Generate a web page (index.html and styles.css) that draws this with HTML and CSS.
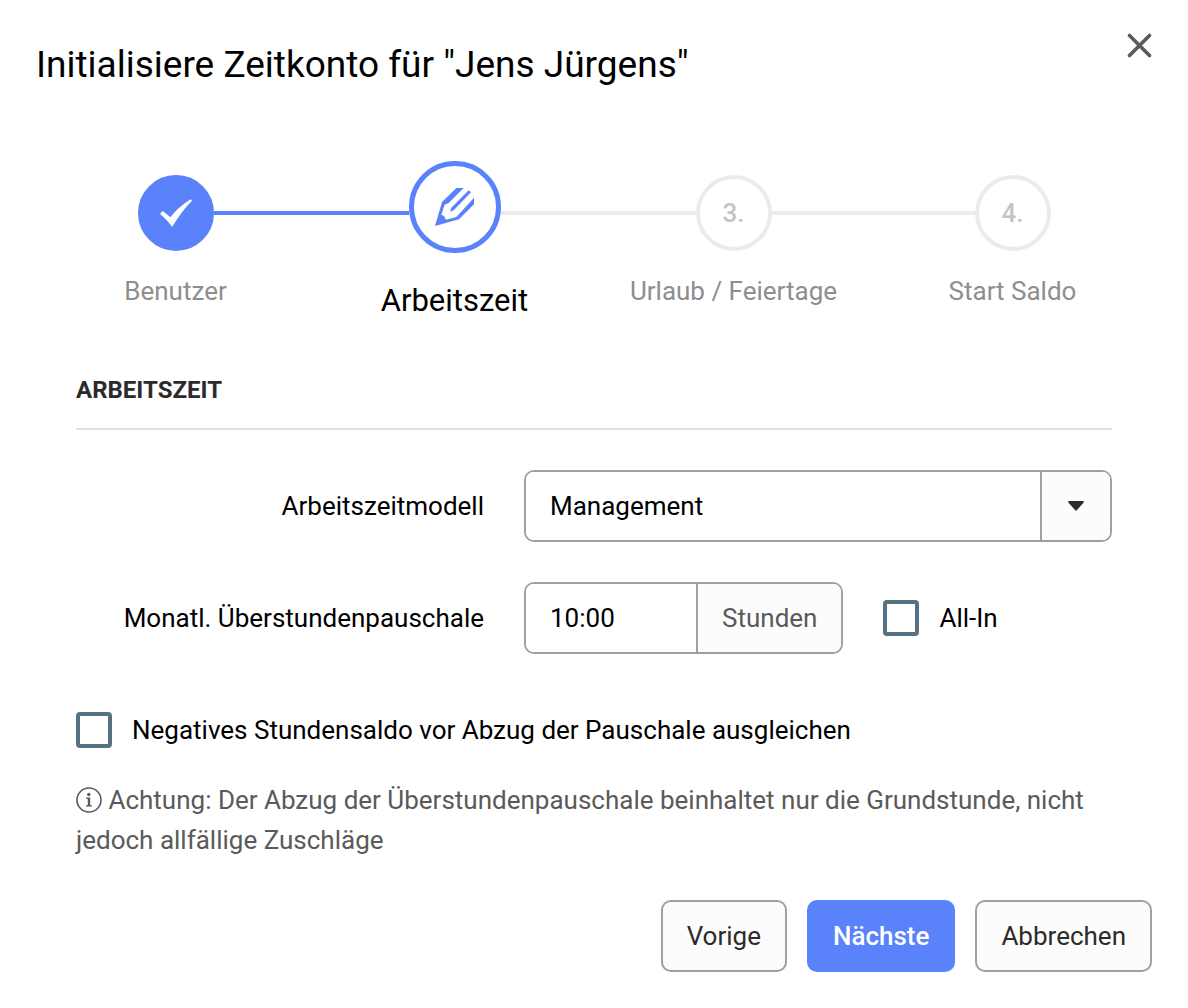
FILE: index.html
```html
<!DOCTYPE html>
<html lang="de">
<head>
<meta charset="utf-8">
<meta name="viewport" content="width=device-width, initial-scale=1">
<title>Initialisiere Zeitkonto</title>
<link rel="stylesheet" href="styles.css">
</head>
<body>
<main class="dialog">
  <header class="dialog-header">
    <h1 class="dialog-title">Initialisiere Zeitkonto für "Jens Jürgens"</h1>
    <button class="close" type="button" aria-label="Schließen">
      <svg width="26" height="26" viewBox="0 0 26 26" fill="none" stroke="#5a5a5a" stroke-width="3.6" stroke-linecap="round"><path d="M3.500 3.500L23.500 23.500M23.500 3.500L3.500 23.500"/></svg>
    </button>
  </header>

  <ol class="steps">
    <li class="step done">
      <div class="track">
        <span class="line hidden"></span>
        <span class="marker"><svg width="32" height="28" viewBox="0 0 96 84" fill="#fff"><path d="M0 45L8 36Q12 38 31 55Q55 24 92 1L96 5Q68 32 36 84Q24 65 0 45Z"/></svg></span>
        <span class="line"></span>
      </div>
      <span class="label">Benutzer</span>
    </li>
    <li class="step active" aria-current="step">
      <div class="track">
        <span class="line reached"></span>
        <span class="marker"><svg width="39" height="38" viewBox="108 111 117 114" fill="#5a82fa"><path d="M172 111H194L149 156L137 161L127 191L135 195L141 206L172 198L225 140V160L180 205L108 225L129 153ZM209 118L216 124L164 178L153 182L157 170Z"/></svg></span>
        <span class="line"></span>
      </div>
      <span class="label">Arbeitszeit</span>
    </li>
    <li class="step">
      <div class="track">
        <span class="line"></span>
        <span class="marker">3.</span>
        <span class="line"></span>
      </div>
      <span class="label">Urlaub / Feiertage</span>
    </li>
    <li class="step">
      <div class="track">
        <span class="line"></span>
        <span class="marker">4.</span>
        <span class="line hidden"></span>
      </div>
      <span class="label">Start Saldo</span>
    </li>
  </ol>

  <form class="form">
    <h2 class="section-title">Arbeitszeit</h2>

    <div class="row">
      <label class="row-label" for="model">Arbeitszeitmodell</label>
      <div class="select-box">
        <select id="model" class="select"><option>Management</option></select>
        <span class="arrow" aria-hidden="true"><svg width="16" height="10" viewBox="0 0 16 10" fill="#2b2b2b"><path d="M1 0H15Q16.500 .5 15.500 1.800L9 9Q8 10 7 9L.5 1.800Q-.5 .5 1 0Z"/></svg></span>
      </div>
    </div>

    <div class="row">
      <label class="row-label" for="hours">Monatl. Überstundenpauschale</label>
      <div class="row-fields">
        <div class="input-group">
          <input id="hours" class="input" type="text" value="10:00">
          <span class="unit">Stunden</span>
        </div>
        <label class="check"><input class="checkbox" type="checkbox">All-In</label>
      </div>
    </div>

    <label class="check check-wide"><input class="checkbox" type="checkbox">Negatives Stundensaldo vor Abzug der Pauschale ausgleichen</label>

    <p class="hint"><svg class="info" width="26" height="26" viewBox="0 0 26 26"><circle cx="13" cy="13" r="12" fill="none" stroke="#5a5a5a" stroke-width="1.600"/><circle cx="12.800" cy="7.500" r="1.700" fill="#5a5a5a"/><path d="M10 10.500H14.200V18L16 18.500V19.500H10V18.500L11.800 18V12L10 11.500Z" fill="#5a5a5a"/></svg> Achtung: Der Abzug der Überstundenpauschale beinhaltet nur die Grundstunde, nicht jedoch allfällige Zuschläge</p>
  </form>

  <footer class="actions">
    <button class="button" type="button">Vorige</button>
    <button class="button primary" type="button">Nächste</button>
    <button class="button" type="button">Abbrechen</button>
  </footer>
</main>
</body>
</html>
```

FILE: styles.css
```css
* { box-sizing: border-box; }

body {
  margin: 0;
  background: #fff;
  color: #000;
  font-family: Roboto, "Liberation Sans", sans-serif;
  font-size: 26px;
  line-height: 40px;
}

.dialog { padding: 32px 36px 36px; }

.dialog-header {
  display: flex;
  justify-content: space-between;
  align-items: flex-start;
}

.dialog-title {
  margin: 8px 0 0;
  font-size: 37px;
  font-weight: 400;
  line-height: 49px;
}

.close {
  display: flex;
  padding: 0;
  border: 0;
  background: none;
}

/* Stepper */
.steps {
  display: grid;
  grid-template-columns: repeat(4, 1fr);
  margin: 72px 0 0;
  padding: 0;
  list-style: none;
}

.step { text-align: center; }

.track {
  display: flex;
  align-items: flex-start;
  height: 92px;
}

.line {
  flex: 1;
  height: 4px;
  margin-top: 50px;
  background: #ebebeb;
}

.done .line,
.line.reached { background: #5a82fa; }

.line.hidden { visibility: hidden; }

.marker {
  display: flex;
  flex: none;
  align-items: center;
  justify-content: center;
  width: 76px;
  height: 76px;
  margin-top: 14px;
  border: 4px solid #ebebeb;
  border-radius: 50%;
  color: #c4c4c4;
  font-weight: 500;
}

.done .marker {
  border-color: #5a82fa;
  background: #5a82fa;
}

.active .marker {
  width: 92px;
  height: 92px;
  margin-top: 0;
  border: 5px solid #5a82fa;
}

.label {
  display: block;
  margin-top: 18px;
  color: #8e8e8e;
}

.active .label {
  margin-top: 28px;
  color: #000;
  font-size: 31px;
}

/* Form */
.form { padding: 49px 40px 0; }

.section-title {
  margin: 0 0 40px;
  padding-bottom: 18px;
  border-bottom: 2px solid #e2e2e2;
  color: #2b2b2b;
  font-size: 24px;
  font-weight: 700;
  text-transform: uppercase;
}

.row {
  display: grid;
  grid-template-columns: 408fr 588fr;
  column-gap: 40px;
  align-items: center;
  margin-bottom: 40px;
}

.row-label { text-align: right; }

.row-fields {
  display: flex;
  align-items: center;
  gap: 40px;
}

.select-box,
.input-group {
  display: flex;
  height: 72px;
  overflow: hidden;
  border: 2px solid #a0a0a0;
  border-radius: 10px;
}

.select-box { display: grid; grid-template-columns: 1fr 70px; }

.select {
  grid-area: 1 / 1 / 2 / 3;
  appearance: none;
  padding: 0 24px;
  border: 0;
  background: #fff;
  color: #000;
  font: inherit;
}

.arrow {
  grid-area: 1 / 2;
  display: flex;
  align-items: center;
  justify-content: center;
  border-left: 2px solid #a0a0a0;
  background: #fcfcfc;
  pointer-events: none;
}

.input {
  width: 170px;
  padding: 0 24px;
  border: 0;
  color: #000;
  font: inherit;
}

.unit {
  padding: 14px 24px;
  border-left: 2px solid #a0a0a0;
  background: #fcfcfc;
  color: #5a5a5a;
}

.check {
  display: flex;
  align-items: center;
  gap: 20px;
}

.check-wide { margin-top: 56px; }

.checkbox {
  appearance: none;
  flex: none;
  width: 36px;
  height: 36px;
  margin: 0;
  border: 4px solid #567282;
  border-radius: 4px;
  background: #fff;
}

.hint {
  margin: 30px 0 0;
  color: #5a5a5a;
}

.info { vertical-align: -4px; }

/* Footer */
.actions {
  display: flex;
  justify-content: flex-end;
  gap: 20px;
  margin-top: 40px;
}

.button {
  height: 72px;
  padding: 0 24px;
  border: 2px solid #a0a0a0;
  border-radius: 10px;
  background: #fcfcfc;
  color: #2b2b2b;
  font: inherit;
}

.primary {
  border-color: #5a82fa;
  background: #5a82fa;
  color: #fff;
  font-weight: 500;
}
```
